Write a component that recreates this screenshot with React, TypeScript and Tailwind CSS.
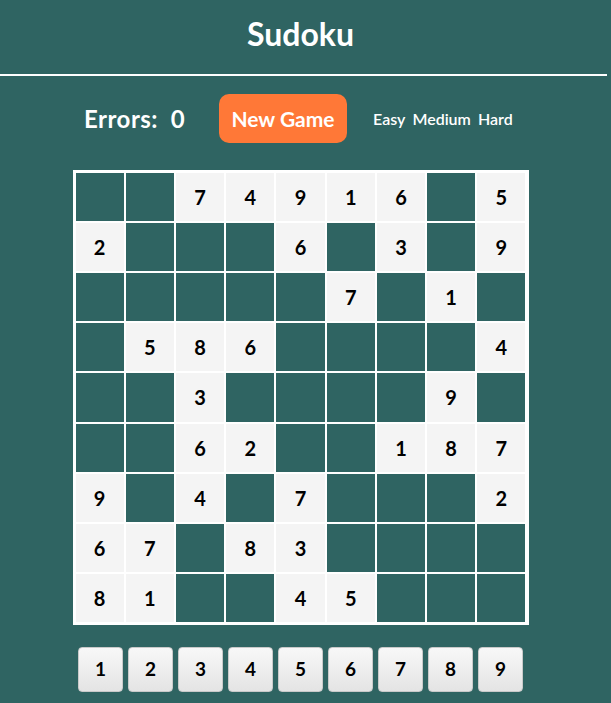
import React from "react";

const grid: string[] = [
  "__74916_5",
  "2___6_3_9",
  "_____7_1_",
  "_586____4",
  "__3____9_",
  "__62__187",
  "9_4_7___2",
  "67_83____",
  "81__45___",
];

export default function App() {
  return (
    <div
      className="min-h-[703px] w-full bg-[#2f6462] text-white"
      style={{ fontFamily: "Lato, 'Noto Sans', sans-serif" }}
    >
      <div className="w-[601px]">
        <h1 className="pt-[16px] text-center text-[32px] font-bold leading-[36px]">Sudoku</h1>
      </div>
      <div className="mt-[22px] h-[2px] w-[607px] bg-white" />
      <div className="w-[601px]">
        <div className="mt-[18px] flex h-[49px] items-center pl-[84px]">
          <div className="w-[102px] whitespace-nowrap text-[24px] font-bold tracking-[0.5px]">Errors:&nbsp;&nbsp;0</div>
          <button className="ml-[33px] h-[49px] w-[128px] rounded-[10px] bg-[#ff7837] text-[21px] font-bold text-white">
            New Game
          </button>
          <div className="ml-[26px] flex gap-[7px] text-[16px] font-semibold">
            <span>Easy</span>
            <span>Medium</span>
            <span>Hard</span>
          </div>
        </div>
        <div className="mx-auto mt-[27px] grid h-[455px] w-[456px] grid-cols-9 gap-[2px] border-[3px] border-white bg-white">
          {grid.flatMap((row, r) =>
            row.split("").map((c, i) => (
              <div
                key={`${r}-${i}`}
                className={
                  c === "_"
                    ? "bg-[#2f6462]"
                    : "flex items-center justify-center bg-[#f4f4f4] text-[20px] font-bold text-black"
                }
              >
                {c === "_" ? "" : c}
              </div>
            ))
          )}
        </div>
        <div className="mt-[22px] flex justify-center gap-[5px]">
          {[1, 2, 3, 4, 5, 6, 7, 8, 9].map((n) => (
            <button
              key={n}
              className="flex h-[45px] w-[45px] items-center justify-center rounded-[4px] border border-[#c9c9c9] bg-gradient-to-b from-[#f8f8f8] to-[#e4e4e4] text-[19px] font-bold text-black"
            >
              {n}
            </button>
          ))}
        </div>
      </div>
    </div>
  );
}
